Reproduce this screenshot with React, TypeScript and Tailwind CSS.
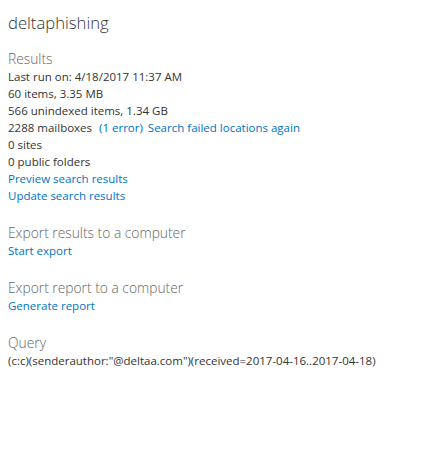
export default function App() {
  const link = 'text-[#0072c6]';
  const heading = 'text-[13.8px] font-light leading-[18px] text-[#666]';
  return (
    <div className="min-h-screen bg-white px-2 pt-[11px] text-[11.5px] leading-[17px] text-[#333] font-['Open_Sans',sans-serif]">
      <h1 className="text-[16.7px] font-light leading-[24px] text-[#333]">deltaphishing</h1>

      <h2 className={`mt-[15px] ${heading}`}>Results</h2>
      <div>Last run on: 4/18/2017 11:37 AM</div>
      <div>60 items, 3.35 MB</div>
      <div>566 unindexed items, 1.34 GB</div>
      <div>
        2288 mailboxes <span className={`ml-1 ${link}`}>(1 error)</span>
        <span className={`ml-[5px] ${link}`}>Search failed locations again</span>
      </div>
      <div>0 sites</div>
      <div>0 public folders</div>
      <div className={link}>Preview search results</div>
      <div className={link}>Update search results</div>

      <h2 className={`mt-[20px] ${heading}`}>Export results to a computer</h2>
      <div className={link}>Start export</div>

      <h2 className={`mt-[20px] ${heading}`}>Export report to a computer</h2>
      <div className={link}>Generate report</div>

      <h2 className={`mt-[20px] ${heading}`}>Query</h2>
      <div>(c:c)(senderauthor:"@deltaa.com")(received=2017-04-16..2017-04-18)</div>
    </div>
  );
}
